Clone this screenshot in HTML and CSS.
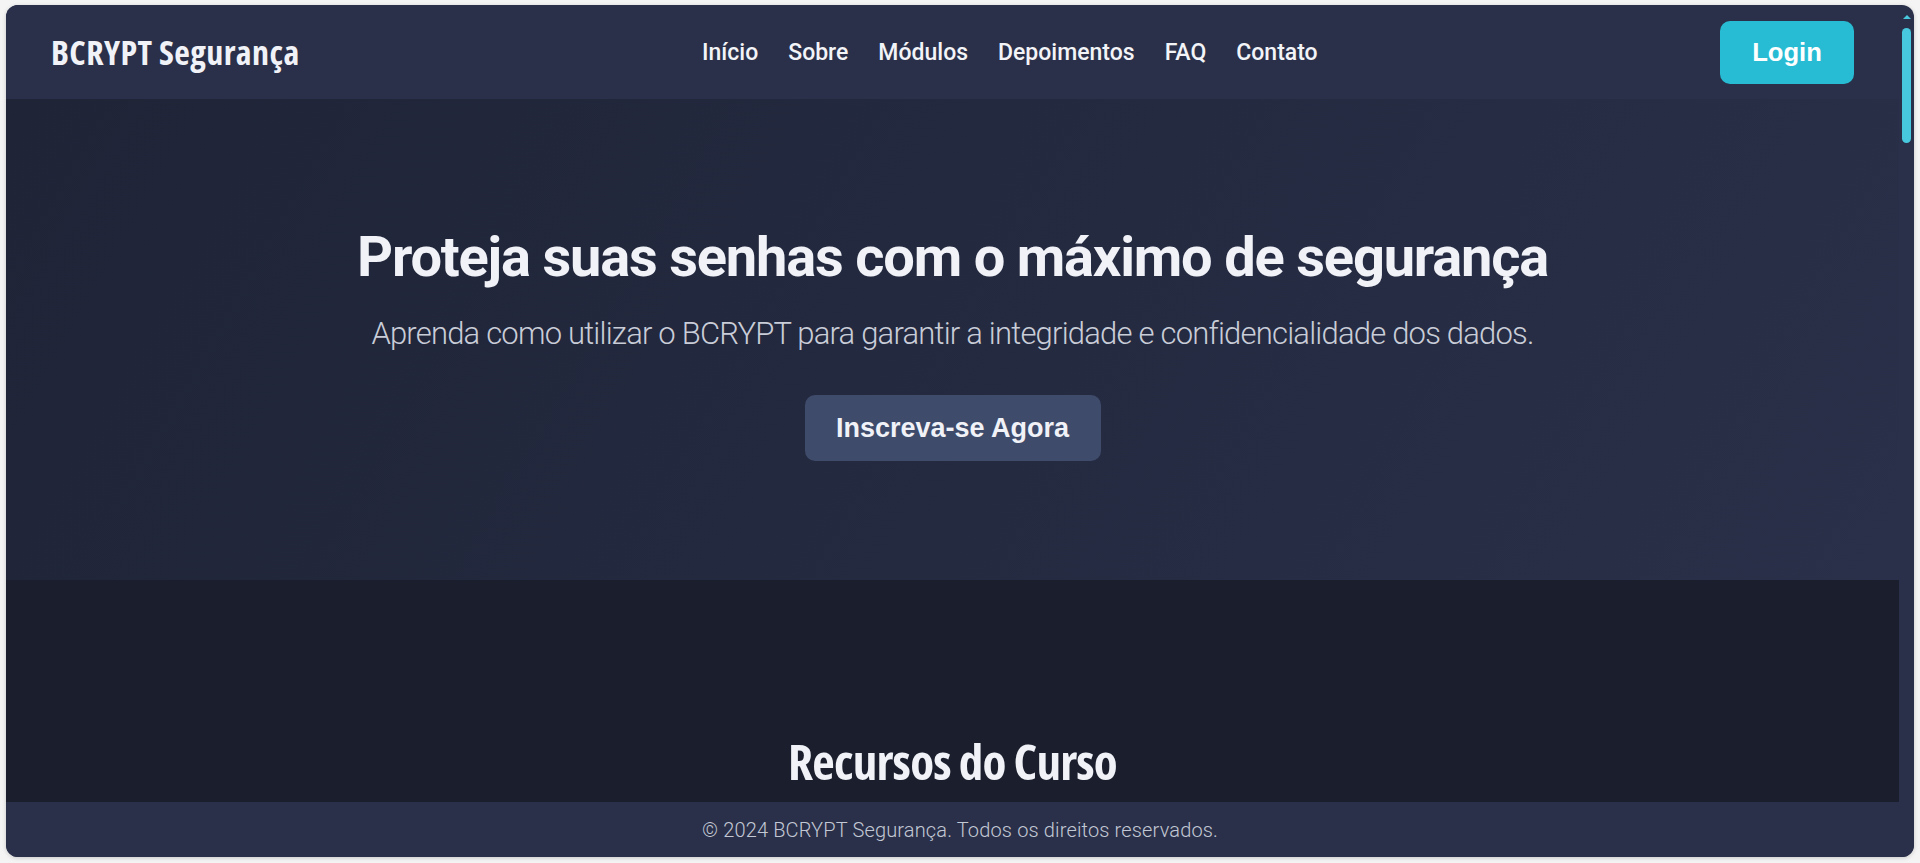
FILE: index.html
```html
<!DOCTYPE html>
<html lang="pt-BR">
<head>
<meta charset="utf-8">
<title>BCRYPT Segurança</title>
<link rel="stylesheet" href="styles.css">
</head>
<body>
<div class="app">
  <div class="viewport">
    <div class="scroller">
      <header class="topbar">
        <div class="logo">BCRYPT Segurança</div>
        <nav class="nav">
          <a href="#inicio">Início</a>
          <a href="#sobre">Sobre</a>
          <a href="#modulos">Módulos</a>
          <a href="#depoimentos">Depoimentos</a>
          <a href="#faq">FAQ</a>
          <a href="#contato">Contato</a>
        </nav>
        <button class="btn-login">Login</button>
      </header>

      <section class="hero" id="inicio">
        <h1 class="hero-title">Proteja suas senhas com o máximo de segurança</h1>
        <p class="hero-sub">Aprenda como utilizar o BCRYPT para garantir a integridade e confidencialidade dos dados.</p>
        <button class="btn-cta">Inscreva-se Agora</button>
      </section>

      <section class="features" id="sobre">
        <h2 class="section-title">Recursos do Curso</h2>
      </section>
    </div>
    <div class="rail" aria-hidden="true">
      <span class="rail-arrow"></span>
      <span class="rail-thumb"></span>
    </div>
  </div>
  <footer class="footer">© 2024 BCRYPT Segurança. Todos os direitos reservados.</footer>
</div>
</body>
</html>
```
FILE: styles.css
```css
html, body {
  margin: 0;
  padding: 0;
  background: #f4f4f5;
  height: 100%;
}

.app {
  margin: 5px 6px 6px;
  height: calc(100vh - 11px);
  border-radius: 12px;
  overflow: hidden;
  background: #2a3049;
  box-shadow: 0 1px 4px rgba(0, 0, 0, 0.18);
  display: flex;
  flex-direction: column;
  color: #f0f2f7;
}

.viewport {
  flex: 1;
  min-height: 0;
  display: flex;
}

.scroller {
  flex: 1;
  min-width: 0;
  overflow: hidden;
}

.rail {
  flex: 0 0 15px;
  display: flex;
  flex-direction: column;
  align-items: center;
  padding-top: 10px;
}

.rail-arrow {
  width: 0;
  height: 0;
  margin-left: 1px;
  border-left: 4px solid transparent;
  border-right: 4px solid transparent;
  border-bottom: 4px solid #48c8de;
}

.rail-thumb {
  margin-top: 9px;
  width: 9px;
  height: 115px;
  border-radius: 5px;
  background: #48c8de;
}

.topbar {
  height: 94px;
  padding: 0 45px;
  display: flex;
  align-items: center;
  justify-content: space-between;
  background: #2a3049;
}

.logo {
  font-family: "Open Sans", sans-serif;
  font-stretch: condensed;
  font-weight: 700;
  font-size: 34px;
  letter-spacing: 0.4px;
  color: #f0f2f7;
}

.nav {
  display: flex;
  gap: 30px;
}

.nav a {
  font-family: Roboto, sans-serif;
  font-weight: 500;
  font-size: 23px;
  color: #f3f4f8;
  text-decoration: none;
}

.btn-login {
  border: 0;
  background: #28bcd4;
  color: #fff;
  font-family: "Liberation Sans", Arial, sans-serif;
  font-weight: 700;
  font-size: 25.6px;
  width: 134px;
  height: 63px;
  border-radius: 10px;
}

.hero {
  background: linear-gradient(120deg, #1f2437 0%, #242a40 55%, #2a3049 100%);
  padding: 125px 0 119px;
  text-align: center;
  display: flex;
  flex-direction: column;
  align-items: center;
}

.hero-title {
  margin: 0;
  font-family: Roboto, sans-serif;
  font-weight: 700;
  font-size: 56px;
  line-height: 67px;
  letter-spacing: -1.2px;
  color: #f0f2f7;
}

.hero-sub {
  margin: 20px 0 0;
  font-family: Roboto, sans-serif;
  font-weight: 300;
  font-size: 31px;
  line-height: 46px;
  letter-spacing: -0.8px;
  color: #c9cdd8;
}

.btn-cta {
  margin-top: 38px;
  border: 0;
  background: #3f4b6b;
  color: #f0f2f7;
  font-family: "Liberation Sans", Arial, sans-serif;
  font-weight: 700;
  font-size: 27px;
  width: 296px;
  height: 66px;
  border-radius: 10px;
}

.features {
  background: #1b1f2d;
  padding: 152px 45px 120px;
}

.section-title {
  margin: 0;
  text-align: center;
  font-family: "Open Sans", sans-serif;
  font-stretch: condensed;
  font-weight: 700;
  font-size: 49px;
  line-height: 58px;
  letter-spacing: -0.8px;
  color: #f0f2f7;
}

.footer {
  flex: 0 0 55px;
  display: flex;
  align-items: center;
  justify-content: center;
  background: #2a3049;
  font-family: Roboto, sans-serif;
  font-weight: 300;
  font-size: 20px;
  letter-spacing: 0.15px;
  color: #c3c8d5;
}
```
